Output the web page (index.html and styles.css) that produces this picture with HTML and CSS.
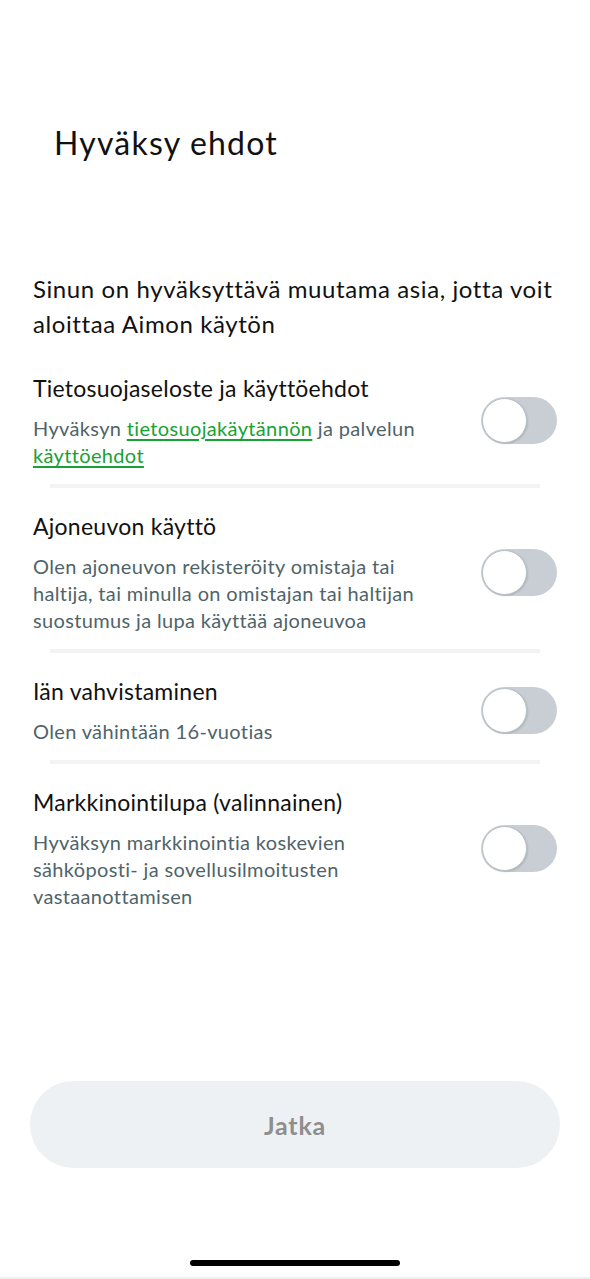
FILE: index.html
```html
<!DOCTYPE html>
<html lang="fi">
<head>
<meta charset="utf-8">
<link rel="stylesheet" href="styles.css">
</head>
<body>
<div class="screen">
  <h1 class="title">Hyväksy ehdot</h1>
  <p class="intro">Sinun on hyväksyttävä muutama asia, jotta voit aloittaa Aimon käytön</p>

  <div class="item">
    <div class="text">
      <div class="item-title">Tietosuojaseloste ja käyttöehdot</div>
      <div class="item-desc">Hyväksyn <a class="link">tietosuojakäytännön</a> ja palvelun <a class="link">käyttöehdot</a></div>
    </div>
    <div class="toggle"><span class="knob"></span></div>
  </div>
  <div class="divider"></div>

  <div class="item">
    <div class="text">
      <div class="item-title">Ajoneuvon käyttö</div>
      <div class="item-desc">Olen ajoneuvon rekisteröity omistaja tai haltija, tai minulla on omistajan tai haltijan suostumus ja lupa käyttää ajoneuvoa</div>
    </div>
    <div class="toggle"><span class="knob"></span></div>
  </div>
  <div class="divider"></div>

  <div class="item">
    <div class="text">
      <div class="item-title">Iän vahvistaminen</div>
      <div class="item-desc">Olen vähintään 16-vuotias</div>
    </div>
    <div class="toggle"><span class="knob"></span></div>
  </div>
  <div class="divider"></div>

  <div class="item">
    <div class="text">
      <div class="item-title">Markkinointilupa (valinnainen)</div>
      <div class="item-desc">Hyväksyn markkinointia koskevien sähköposti- ja sovellusilmoitusten vastaanottamisen</div>
    </div>
    <div class="toggle"><span class="knob"></span></div>
  </div>

  <div class="spacer"></div>
  <button class="btn">Jatka</button>
  <div class="home"><span class="bar"></span></div>
</div>
</body>
</html>
```
FILE: styles.css
```css
* { box-sizing: border-box; }
html, body { margin: 0; padding: 0; background: #fff; }
body { font-family: "Lato", "Open Sans", sans-serif; color: #111; }
.screen {
  width: 590px;
  height: 1279px;
  display: flex;
  flex-direction: column;
  padding: 0 33px;
  border-bottom: 2px solid #f0f0f0;
}
.title {
  margin: 121px 0 0 21px;
  font-size: 32px;
  font-weight: 400;
  line-height: 44px;
  letter-spacing: 1.2px;
}
.intro {
  margin: 106px 0 0 0;
  font-size: 24px;
  line-height: 35px;
  letter-spacing: 0.6px;
}
.item {
  display: flex;
  align-items: center;
  justify-content: space-between;
}
.intro + .item { margin-top: 31px; }
.text { width: 430px; }
.item-title {
  font-size: 23px;
  line-height: 32px;
  letter-spacing: 0.25px;
  margin-bottom: 11px;
}
.item-desc {
  font-size: 20px;
  line-height: 27px;
  letter-spacing: 0.35px;
  color: #4f6469;
  max-width: 420px;
}
.link {
  color: #17a234;
  text-decoration: underline;
  text-underline-offset: 3px;
  text-decoration-thickness: 1.5px;
}
.toggle {
  flex: none;
  width: 76px;
  height: 47px;
  border-radius: 24px;
  background: #c8ced3;
  position: relative;
  margin-top: 0;
}
.knob {
  position: absolute;
  left: 1px;
  top: 1px;
  width: 45px;
  height: 45px;
  border-radius: 50%;
  background: #fff;
  border: 1.5px solid #b9c0c5;
  box-shadow: 1px 1px 2px rgba(0,0,0,0.12);
}
.divider {
  height: 4px;
  background: #f2f3f5;
  margin: 15px 17px 22px 17px;
}
.spacer { flex: 1; }
.btn {
  margin: 0 -3px;
  height: 87px;
  flex: none;
  border: none;
  border-radius: 44px;
  background: #eef1f4;
  font-family: inherit;
  font-size: 25px;
  font-weight: 700;
  color: #8e8e8e;
  letter-spacing: 0.8px;
}
.home {
  height: 109px;
  flex: none;
  display: flex;
  justify-content: center;
  align-items: flex-end;
  padding-bottom: 11px;
}
.bar {
  width: 210px;
  height: 6px;
  border-radius: 3px;
  background: #000;
}
```
